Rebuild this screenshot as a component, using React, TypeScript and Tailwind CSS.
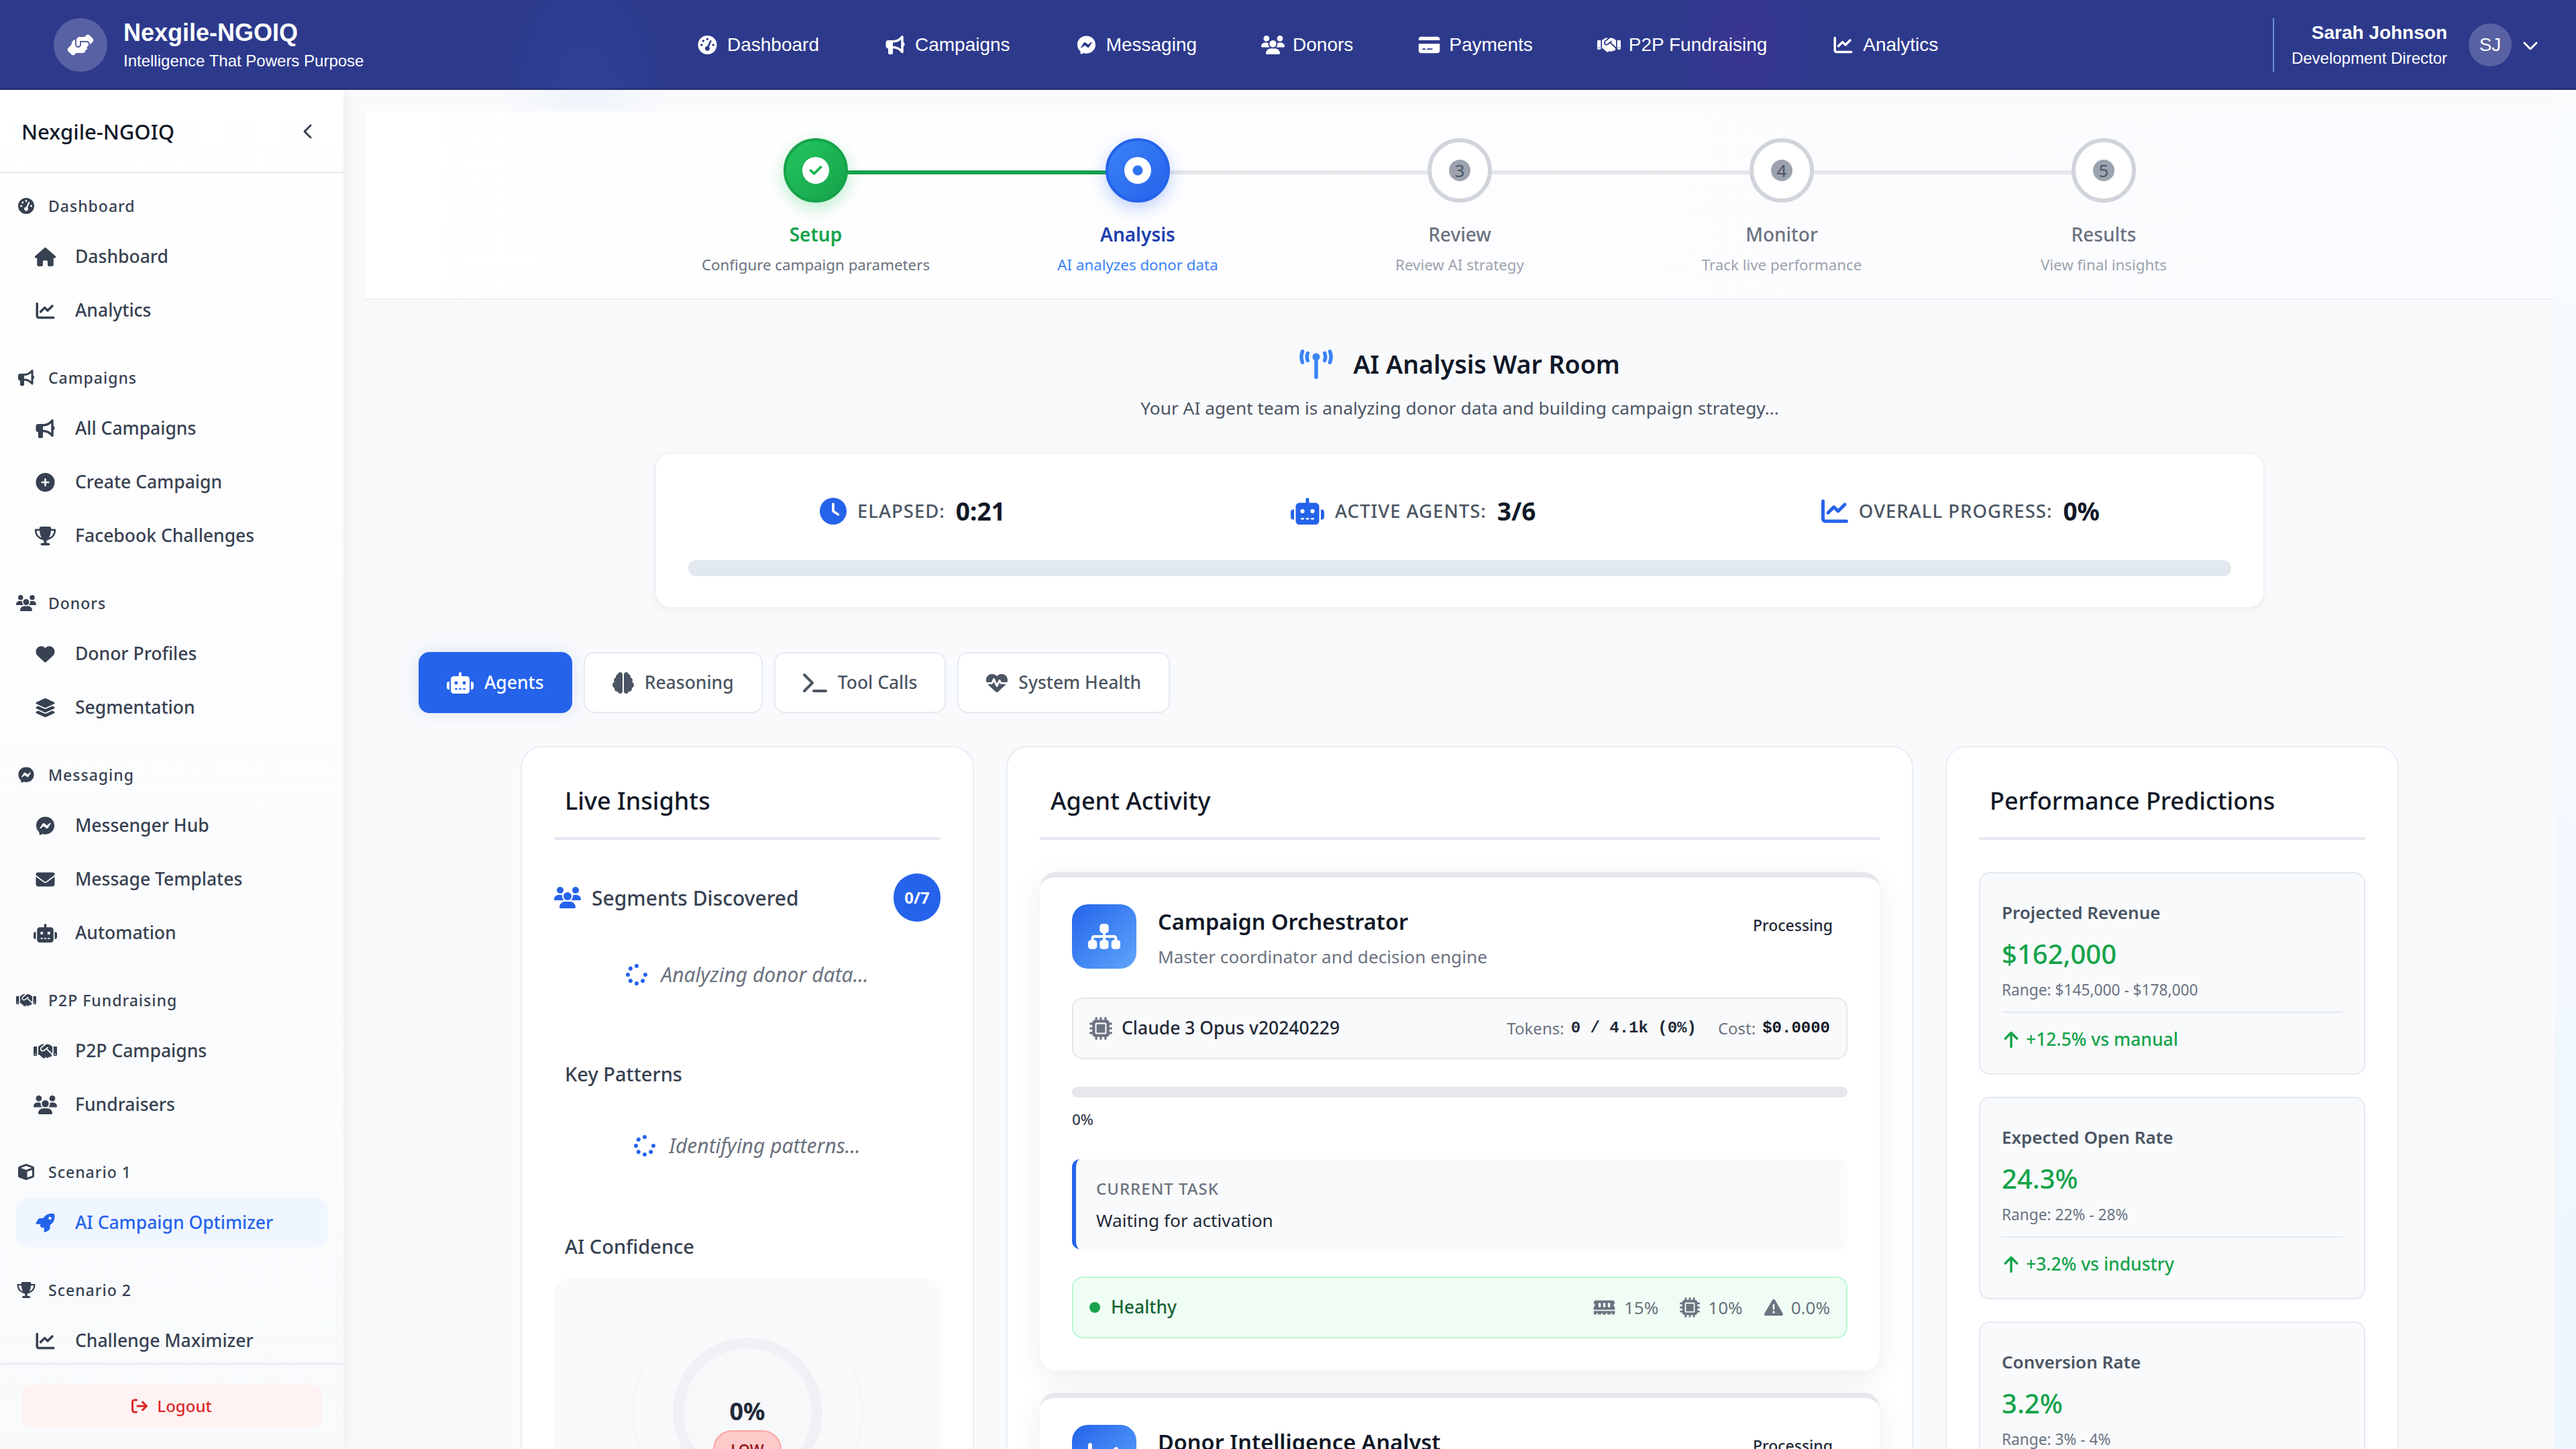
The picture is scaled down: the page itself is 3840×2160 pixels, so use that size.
import React from 'react';
import {
  FaArrowRightFromBracket, FaArrowUp, FaBrain, FaBullhorn, FaChartLine, FaChevronDown, FaChevronLeft, FaCircleCheck,
  FaCircleDot, FaCirclePlus, FaClock, FaCreditCard, FaCube, FaEnvelope, FaFacebookMessenger, FaGaugeHigh, FaHandshake,
  FaHandshakeAngle, FaHeart, FaHeartPulse, FaHouse, FaLayerGroup, FaMemory, FaMicrochip, FaRobot, FaRocket, FaSitemap,
  FaSpinner, FaTerminal, FaTowerBroadcast, FaTriangleExclamation, FaTrophy, FaUsers,
} from 'react-icons/fa6';

const topNav = [
  { label: 'Dashboard', icon: FaGaugeHigh },
  { label: 'Campaigns', icon: FaBullhorn },
  { label: 'Messaging', icon: FaFacebookMessenger },
  { label: 'Donors', icon: FaUsers },
  { label: 'Payments', icon: FaCreditCard },
  { label: 'P2P Fundraising', icon: FaHandshake },
  { label: 'Analytics', icon: FaChartLine },
];

const sideNav = [
  { title: 'Dashboard', icon: FaGaugeHigh, items: [{ label: 'Dashboard', icon: FaHouse }, { label: 'Analytics', icon: FaChartLine }] },
  { title: 'Campaigns', icon: FaBullhorn, items: [{ label: 'All Campaigns', icon: FaBullhorn }, { label: 'Create Campaign', icon: FaCirclePlus }, { label: 'Facebook Challenges', icon: FaTrophy }] },
  { title: 'Donors', icon: FaUsers, items: [{ label: 'Donor Profiles', icon: FaHeart }, { label: 'Segmentation', icon: FaLayerGroup }] },
  { title: 'Messaging', icon: FaFacebookMessenger, items: [{ label: 'Messenger Hub', icon: FaFacebookMessenger }, { label: 'Message Templates', icon: FaEnvelope }, { label: 'Automation', icon: FaRobot }] },
  { title: 'P2P Fundraising', icon: FaHandshake, items: [{ label: 'P2P Campaigns', icon: FaHandshake }, { label: 'Fundraisers', icon: FaUsers }] },
  { title: 'Scenario 1', icon: FaCube, items: [{ label: 'AI Campaign Optimizer', icon: FaRocket, active: true }] },
  { title: 'Scenario 2', icon: FaTrophy, items: [{ label: 'Challenge Maximizer', icon: FaChartLine }] },
];

const steps = [
  { label: 'Setup', desc: 'Configure campaign parameters', state: 'done' },
  { label: 'Analysis', desc: 'AI analyzes donor data', state: 'active' },
  { label: 'Review', desc: 'Review AI strategy', state: 'todo', n: 3 },
  { label: 'Monitor', desc: 'Track live performance', state: 'todo', n: 4 },
  { label: 'Results', desc: 'View final insights', state: 'todo', n: 5 },
];

const tabs = [
  { label: 'Agents', icon: FaRobot, iconClass: 'h-[32px] w-[40px]', active: true },
  { label: 'Reasoning', icon: FaBrain, iconClass: 'h-[32px] w-[32px]' },
  { label: 'Tool Calls', icon: FaTerminal, iconClass: 'h-[32px] w-[36px]' },
  { label: 'System Health', icon: FaHeartPulse, iconClass: 'h-[32px] w-[32px]' },
];

const predictions = [
  { label: 'Projected Revenue', value: '$162,000', range: 'Range: $145,000 - $178,000', trend: '+12.5% vs manual' },
  { label: 'Expected Open Rate', value: '24.3%', range: 'Range: 22% - 28%', trend: '+3.2% vs industry' },
  { label: 'Conversion Rate', value: '3.2%', range: 'Range: 3% - 4%', trend: '+0.6% vs average' },
];

const Stat = ({ icon: Icon, iconClass, label, value }: { icon: React.ElementType; iconClass: string; label: string; value: string }) => (
  <div className="flex items-center">
    <Icon className={iconClass} />
    <span className="ml-4 text-[27.5px] font-medium uppercase tracking-[1px] text-[#4b5563]">{label}:</span>
    <span className="ml-4 text-[37px] font-bold text-[#111827]">{value}</span>
  </div>
);

const StepCircle = ({ state, n }: { state: string; n?: number }) => {
  if (state === 'done') {
    return (
      <div className="flex h-[96px] w-[96px] items-center justify-center rounded-full border-[4px] border-[#16a34a] bg-gradient-to-br from-[#22c55e] to-[#16a34a] text-[40px] text-white shadow-[0_8px_24px_rgba(34,197,94,0.3)]">
        <FaCircleCheck />
      </div>
    );
  }
  if (state === 'active') {
    return (
      <div className="flex h-[96px] w-[96px] items-center justify-center rounded-full border-[4px] border-[#2563eb] bg-gradient-to-br from-[#3b82f6] to-[#2563eb] text-[40px] text-white shadow-[0_8px_24px_rgba(37,99,235,0.3)]">
        <FaCircleDot />
      </div>
    );
  }
  return (
    <div className="flex h-[96px] w-[96px] items-center justify-center rounded-full border-[6px] border-[#d1d5db] bg-white">
      <span className="flex h-[32px] w-[32px] items-center justify-center rounded-full bg-[#9ca3af] text-[26px] text-[#4b5563]">{n}</span>
    </div>
  );
};

const Loading = ({ text }: { text: string }) => (
  <div className="flex items-center justify-center">
    <FaSpinner className="text-[32px] text-[#2563eb]" />
    <span className="ml-[20px] text-[30px] italic text-[#6b7280]">{text}</span>
  </div>
);

const CardTitle = ({ children }: { children: React.ReactNode }) => (
  <div className="border-b-[4px] border-[#e5e9f0] pb-[28px] pl-[16px] text-[36px] leading-[52px] font-medium text-[#111827]">{children}</div>
);

const AgentCard = ({ name, desc, icon: Icon }: { name: string; desc: string; icon: React.ElementType }) => (
  <div className="rounded-[24px] border-t-[8px] border-[#e5e7eb] bg-white px-[48px] pt-[40px] pb-[48px] shadow-[0_10px_40px_rgba(0,0,0,0.08)]">
    <div className="flex items-start">
      <div className="flex h-[96px] w-[96px] items-center justify-center rounded-[24px] bg-gradient-to-br from-[#2563eb] to-[#60a5fa] text-[48px] text-white">
        <Icon />
      </div>
      <div className="ml-[32px] flex-1">
        <div className="text-[32.5px] leading-[52px] font-semibold text-[#111827]">{name}</div>
        <div className="mt-[6px] text-[26.2px] leading-[40px] text-[#6b7280]">{desc}</div>
      </div>
      <div className="mt-[14px] mr-[22px] text-[23px] font-medium text-[#1f2937]">Processing</div>
    </div>
    <div className="mt-[41px] flex h-[92px] items-center rounded-[16px] border-[2px] border-[#e5e7eb] bg-[#f9fafb] px-[24px]">
      <FaMicrochip className="text-[34px] text-[#6b7280]" />
      <span className="ml-[14px] flex-1 text-[26.5px] font-medium text-[#1f2937]">Claude 3 Opus v20240229</span>
      <span className="text-[24px] text-[#6b7280]">Tokens:</span>
      <span className="ml-[10px] font-['Liberation_Mono',monospace] text-[24px] font-bold text-[#1f2937]">0 / 4.1k (0%)</span>
      <span className="ml-[32px] text-[24px] text-[#6b7280]">Cost:</span>
      <span className="ml-[10px] font-['Liberation_Mono',monospace] text-[24px] font-bold text-[#111827]">$0.0000</span>
    </div>
    <div className="mt-[41px] h-[16px] rounded-full bg-[#e5e7eb]" />
    <div className="mt-[18px] text-[22.5px] leading-[30px] font-medium text-[#374151]">0%</div>
    <div className="mt-[44px] h-[134px] rounded-[12px] border-l-[6px] border-[#2563eb] bg-[#f9fafb] pt-[28px] pl-[30px]">
      <div className="text-[24px] leading-[32px] font-medium tracking-[1px] text-[#6b7280]">CURRENT TASK</div>
      <div className="mt-[13px] text-[26.3px] leading-[36px] text-[#1f2937]">Waiting for activation</div>
    </div>
    <div className="mt-[41px] flex h-[92px] items-center rounded-[16px] border-[2px] border-[#bbf7d0] bg-[#f0fdf4] px-[24px] text-[26px] text-[#6b7280]">
      <span className="h-[16px] w-[16px] rounded-full bg-[#16a34a]" />
      <span className="ml-[16px] flex-1 text-[26.5px] font-medium text-[#166534]">Healthy</span>
      <FaMemory className="h-[28px] w-[35px]" />
      <span className="ml-[12px]">15%</span>
      <FaMicrochip className="ml-[32px] h-[30px] w-[30px]" />
      <span className="ml-[12px]">10%</span>
      <FaTriangleExclamation className="ml-[32px] h-[28px] w-[28px]" />
      <span className="ml-[12px]">0.0%</span>
    </div>
  </div>
);

export default function App() {
  return (
    <div className="flex h-[2160px] w-[3840px] flex-col overflow-hidden bg-[#f8fafc] font-['Noto_Sans',sans-serif] leading-normal">
      <header className="relative z-20 flex h-[134px] shrink-0 items-center border-b-[2px] border-[#232c6e] bg-[#2d3a8c] bg-[radial-gradient(ellipse_130px_200px_at_872px_100%,#2f4296,transparent),radial-gradient(ellipse_110px_200px_at_2600px_50%,#3a3592,transparent)] pt-[2px] pl-[80px] text-white">
        <div className="flex h-[80px] w-[80px] items-center justify-center rounded-full bg-white/20">
          <FaHandshakeAngle className="h-[32px] w-[40px]" />
        </div>
        <div className="ml-[24px] w-[853px] font-['Liberation_Sans',sans-serif]">
          <div className="text-[36px] leading-[44px] font-bold">Nexgile-NGOIQ</div>
          <div className="mt-[4px] text-[24px] leading-[32px] font-normal">Intelligence That Powers Purpose</div>
        </div>
        <nav className="flex items-center gap-[96px] font-['Liberation_Sans',sans-serif] text-[28px]">
          {topNav.map(({ label, icon: Icon }) => (
            <div key={label} className="flex items-center gap-[12px]">
              <Icon className="h-[28px] w-[35px]" />
              <span>{label}</span>
            </div>
          ))}
        </nav>
        <div className="ml-auto flex h-[80px] items-center border-l-[2px] border-[#6f8fe0] pr-[56px] pl-[26px] font-['Liberation_Sans',sans-serif]">
          <div className="text-right">
            <div className="text-[28px] leading-[36px] font-bold">Sarah Johnson</div>
            <div className="mt-[4px] text-[24px] leading-[32px]">Development Director</div>
          </div>
          <div className="ml-[32px] flex h-[64px] w-[64px] items-center justify-center rounded-full bg-white/20 text-[28px]">SJ</div>
          <FaChevronDown className="ml-[16px] text-[24px]" />
        </div>
      </header>
      <div className="flex min-h-0 flex-1">
        <aside className="z-10 flex w-[512px] shrink-0 flex-col bg-gradient-to-b from-white to-[#f8fafc] shadow-[4px_0_16px_rgba(0,0,0,0.06)]">
          <div className="flex h-[124px] shrink-0 items-center justify-between border-b-[2px] border-[#e5e7eb] pt-[2px] pr-[40px] pl-[32px]">
            <span className="text-[31px] font-medium text-[#111827]">Nexgile-NGOIQ</span>
            <FaChevronLeft className="text-[24px] text-[#374151]" />
          </div>
          <nav className="min-h-0 flex-1 overflow-hidden px-[24px] pt-[29px]">
            {sideNav.map(({ title, icon: GroupIcon, items }) => (
              <div key={title} className="mb-[44px]">
                <div className="mb-[20px] flex h-[40px] items-center text-[23px] font-medium tracking-[1px] text-[#374151]">
                  <GroupIcon className="h-[24px] w-[30px]" />
                  <span className="ml-[18px]">{title}</span>
                </div>
                <div className="flex flex-col gap-[8px]">
                  {items.map(({ label, icon: Icon, active }: any) => (
                    <div key={label} className={active ? 'flex h-[72px] items-center rounded-[16px] bg-[#eff6ff] text-[#2563eb]' : 'flex h-[72px] items-center text-[#374151]'}>
                      <Icon className="ml-[26px] h-[28px] w-[35px]" />
                      <span className="ml-[27px] text-[26.5px] font-medium">{label}</span>
                    </div>
                  ))}
                </div>
              </div>
            ))}
          </nav>
          <div className="shrink-0 border-t-[2px] border-[#e5e7eb] px-[32px] pt-[30px] pb-[32px]">
            <div className="flex h-[64px] items-center justify-center rounded-[16px] bg-[#fef2f2] text-[24px] font-medium text-[#dc2626]">
              <FaArrowRightFromBracket />
              <span className="ml-[14px]">Logout</span>
            </div>
          </div>
        </aside>
        <main className="min-w-0 flex-1 bg-gradient-to-b from-[#fafcfe] to-[#edf6fe] pr-[32px]">
          <div className="h-full bg-[#f9fafc] bg-[radial-gradient(ellipse_130px_60px_at_360px_0px,#eef3fb,transparent)] pt-[32px] pl-[32px]">
            <section className="flex h-[281px] justify-center border-b-[2px] border-[#eef0f4] bg-gradient-to-r from-white to-[#fafbfe] pt-[40px]">
              {steps.map(({ label, desc, state, n }, i) => (
                <div key={label} className="relative flex w-[480px] flex-col items-center">
                  {i < steps.length - 1 && (
                    <div className={i === 0 ? 'absolute top-[48px] left-1/2 h-[6px] w-[480px] bg-[#16a34a]' : 'absolute top-[48px] left-1/2 h-[6px] w-[480px] bg-[#e5e7eb]'} />
                  )}
                  <div className="relative">
                    <StepCircle state={state} n={n} />
                  </div>
                  <div className={state === 'done' ? 'mt-[27px] text-[28px] leading-[40px] font-semibold text-[#16a34a]' : state === 'active' ? 'mt-[27px] text-[28px] leading-[40px] font-semibold text-[#1e40af]' : 'mt-[27px] text-[28px] leading-[40px] font-medium text-[#6b7280]'}>{label}</div>
                  <div className={state === 'done' ? 'mt-[10px] text-[22.3px] leading-[32px] text-[#6b7280]' : state === 'active' ? 'mt-[10px] text-[22.3px] leading-[32px] text-[#3b82f6]' : 'mt-[10px] text-[22.3px] leading-[32px] text-[#9ca3af]'}>{desc}</div>
                </div>
              ))}
            </section>

            <div className="mt-[68px] flex h-[56px] items-center justify-center">
              <FaTowerBroadcast className="h-[44px] w-[50px] text-[#3b82f6]" />
              <h1 className="ml-[30px] text-[37.5px] font-semibold text-[#111827]">AI Analysis War Room</h1>
            </div>
            <p className="mt-[17px] text-center text-[26.3px] leading-[40px] text-[#4b5563]">Your AI agent team is analyzing donor data and building campaign strategy...</p>

            <section className="mx-auto mt-[46px] h-[233px] w-[2400px] rounded-[24px] border-[2px] border-[#eef1f6] bg-white px-[48px] pt-[58px] shadow-[0_4px_12px_rgba(0,0,0,0.04)]">
              <div className="flex h-[56px] items-center justify-between px-[196px]">
                <Stat icon={FaClock} iconClass="h-[40px] w-[40px] text-[#2563eb]" label="Elapsed" value="0:21" />
                <Stat icon={FaRobot} iconClass="h-[40px] w-[50px] text-[#2563eb]" label="Active Agents" value="3/6" />
                <Stat icon={FaChartLine} iconClass="h-[40px] w-[40px] text-[#2563eb]" label="Overall Progress" value="0%" />
              </div>
              <div className="mt-[45px] h-[24px] rounded-full bg-[#e2e8f0]" />
            </section>

            <div className="mt-[65px] ml-[80px] flex gap-[17px]">
              {tabs.map(({ label, icon: Icon, iconClass, active }) => (
                <div key={label} className={active ? 'flex h-[91px] items-center gap-[16px] rounded-[16px] bg-[#2563eb] px-[42px] text-[26.5px] font-medium text-white shadow-[0_0_24px_rgba(37,99,235,0.15)]' : 'flex h-[91px] items-center gap-[16px] rounded-[16px] border-[2px] border-[#e5e9f2] bg-white px-[41px] text-[26.5px] font-medium text-[#4b5563]'}>
                  <Icon className={iconClass} />
                  <span>{label}</span>
                </div>
              ))}
            </div>

            <div className="mx-auto mt-[49px] grid h-[1100px] w-[2800px] grid-cols-[1fr_2fr_1fr] items-start gap-[48px]">
              <section className="h-[1100px] rounded-t-[32px] border-[2px] border-[#e8edf3] bg-white px-[48px] pt-[54px]">
                <CardTitle>Live Insights</CardTitle>
                <div className="mt-[50px] flex items-center">
                  <FaUsers className="h-[32px] w-[40px] text-[#2563eb]" />
                  <span className="ml-[16px] flex-1 text-[30px] font-medium text-[#374151]">Segments Discovered</span>
                  <span className="flex h-[72px] w-[70px] items-center justify-center rounded-full bg-[#2563eb] text-[24px] font-bold text-white">0/7</span>
                </div>
                <div className="mt-[56px]">
                  <Loading text="Analyzing donor data..." />
                </div>
                <div className="mt-[106px] pl-[16px] text-[29px] leading-[40px] font-medium text-[#374151]">Key Patterns</div>
                <div className="mt-[64px]">
                  <Loading text="Identifying patterns..." />
                </div>
                <div className="mt-[108px] pl-[16px] text-[29px] leading-[40px] font-medium text-[#374151]">AI Confidence</div>
                <div className="mt-[28px] flex h-[300px] justify-center rounded-t-[24px] bg-[#f8fafc] pt-[31px]">
                  <div className="flex h-[337px] w-[337px] shrink-0 items-center justify-center rounded-full bg-[#f9fafb] shadow-[0_2px_12px_rgba(0,0,0,0.04)]">
                    <div className="flex h-[223px] w-[223px] flex-col items-center rounded-full border-[16px] border-[#eff1f4] bg-[#f7f8fa] pt-[72px]">
                      <span className="text-[36px] leading-[44px] font-bold text-[#1f2937]">0%</span>
                      <span className="mt-[6px] rounded-full border-[2px] border-[#fca5a5] bg-[#fecaca] px-[24px] py-[10px] text-[22px] font-semibold text-[#991b1b]">LOW</span>
                    </div>
                  </div>
                </div>
              </section>

              <section className="h-[1100px] rounded-t-[32px] border-[2px] border-[#e8edf3] bg-white px-[48px] pt-[54px]">
                <CardTitle>Agent Activity</CardTitle>
                <div className="mt-[48px] flex flex-col gap-[33px]">
                  <AgentCard name="Campaign Orchestrator" desc="Master coordinator and decision engine" icon={FaSitemap} />
                  <AgentCard name="Donor Intelligence Analyst" desc="Segments donors and finds patterns" icon={FaChartLine} />
                </div>
              </section>

              <section className="h-[1100px] rounded-t-[32px] border-[2px] border-[#e8edf3] bg-white px-[48px] pt-[54px]">
                <CardTitle>Performance Predictions</CardTitle>
                <div className="mt-[48px] flex flex-col gap-[33px]">
                  {predictions.map((p) => (
                    <div key={p.label} className="h-[302px] shrink-0 rounded-[16px] border-[2px] border-[#e5e9f2] bg-[#f8fafc] px-[32px] pt-[40px]">
                      <div className="text-[26px] leading-[36px] font-semibold text-[#4b5563]">{p.label}</div>
                      <div className="mt-[16px] text-[40px] leading-[56px] font-medium text-[#16a34a]">{p.value}</div>
                      <div className="mt-[10px] text-[22.7px] leading-[32px] text-[#6b7280]">{p.range}</div>
                      <div className="mt-[16px] flex items-center gap-[8px] border-t-[2px] border-[#e5e9f2] pt-[20px] text-[26.5px] font-medium text-[#16a34a]">
                        <FaArrowUp className="text-[28px]" />
                        <span>{p.trend}</span>
                      </div>
                    </div>
                  ))}
                </div>
              </section>
            </div>
          </div>
        </main>
      </div>
    </div>
  );
}
